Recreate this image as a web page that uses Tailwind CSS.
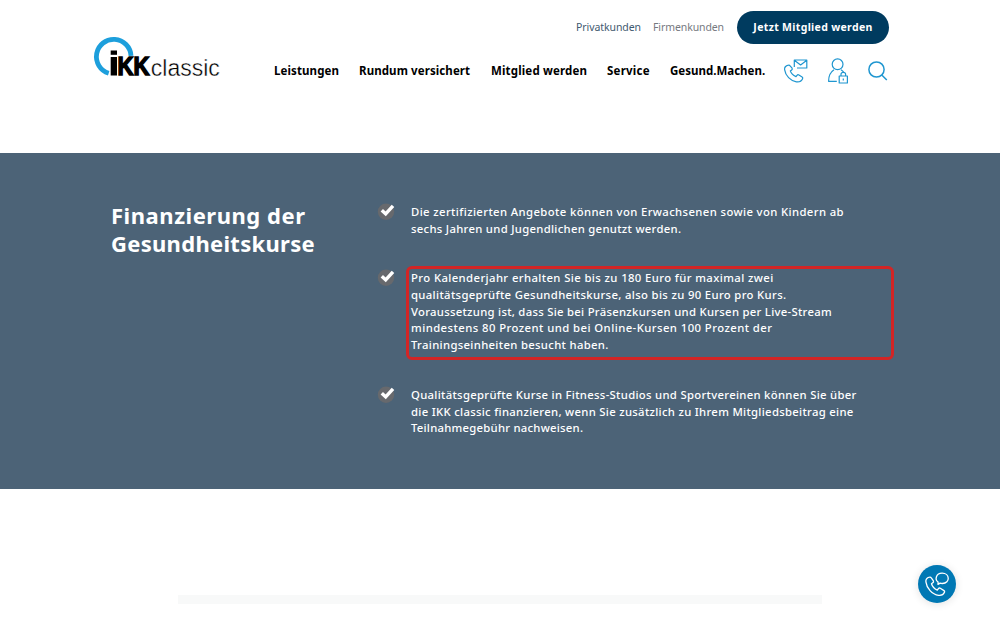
<!DOCTYPE html>
<html lang="de">
<head>
  <meta charset="UTF-8">
  <meta name="viewport" content="width=device-width, initial-scale=1.0">
  <title>IKK classic</title>
  <script src="https://cdn.jsdelivr.net/npm/@tailwindcss/browser@4"></script>
</head>
<body class="relative h-[625px] overflow-hidden bg-white font-['Noto_Sans',sans-serif]">

  <header class="flex h-[153px] justify-between pl-[94px] pr-[111px]">
    <a href="#" class="mt-[36px]">
      <svg class="h-[50px] w-[134px] overflow-visible" viewBox="0 0 134 50">
        <path d="M14.7 37.2A17.3 17.3 0 1 1 37 19.8" fill="none" stroke="#1d9fdc" stroke-width="4.8"/>
        <rect x="16.7" y="14.5" width="6.3" height="4.3"/>
        <rect x="16.7" y="21" width="6.3" height="18.5"/>
        <text x="23.5" y="39.300" font-family="Liberation Sans, sans-serif" font-weight="700" font-size="25" textLength="32" lengthAdjust="spacingAndGlyphs" stroke="#000" stroke-width="1.5">KK</text>
        <text x="56.8" y="39.5" font-family="Liberation Sans, sans-serif" font-size="24.5" textLength="69" lengthAdjust="spacingAndGlyphs" fill="#000" stroke="#fff" stroke-width=".4">classic</text>
      </svg>
    </a>

    <div>
      <div class="mt-[11px] flex h-[33px] items-center justify-end whitespace-nowrap text-[10.5px]">
        <a href="#" class="mr-[12px] tracking-[-0.07px] text-[#3f5a70]">Privatkunden</a>
        <a href="#" class="mr-[13px] tracking-[-0.1px] text-[#76797f]">Firmenkunden</a>
        <a href="#" class="flex h-[33px] w-[152px] items-center justify-center rounded-full bg-[#003b5f] font-bold tracking-[0.33px] text-white">Jetzt Mitglied werden</a>
      </div>

      <nav class="mt-[12px] flex h-[30px] items-center whitespace-nowrap text-[11.5px] font-bold text-black">
        <a href="#" class="w-[85px] tracking-[0.1px]">Leistungen</a>
        <a href="#" class="w-[132px] tracking-[0.09px]">Rundum versichert</a>
        <a href="#" class="w-[116px] tracking-[0.16px]">Mitglied werden</a>
        <a href="#" class="w-[63px] tracking-[0.23px]">Service</a>
        <a href="#" class="w-[113px]">Gesund.Machen.</a>
        <svg class="mr-[17px] size-[26px]" viewBox="0 0 26 26" fill="none" stroke="#1f96d0" stroke-width="1.2" stroke-linejoin="round">
          <path d="M5.5 7.2C3 7.800 1.3 9.300 1.600 11.600C2.400 17.500 7.500 22.900 13.400 23.800C15.700 24.100 18.600 23 19.600 20.700C19.900 20 19.700 19.400 19.100 19L15.900 17C15.200 16.600 14.500 16.700 14 17.300L13 18.600C10.500 17.500 8 15.200 7.300 12.900L8.700 11.900C9.300 11.500 9.400 10.900 9.100 10.200L7.100 7.900C6.700 7.300 6.200 7 5.500 7.200Z"/>
          <path d="M11.300 9V2H23.800V10H14M11.300 2.300L17.600 7L23.800 2.300"/>
        </svg>
        <svg class="mr-[15px] size-[26px]" viewBox="0 0 26 26" fill="none" stroke="#1f96d0" stroke-width="1.2" stroke-linejoin="round">
          <circle cx="11.6" cy="6.3" r="5.4"/>
          <path d="M10.8 23.3H2.6C2.6 18.5 4.1 14.3 8 11.8M15 11.8C16.3 12.6 17.300 13.5 18 14.7"/>
          <path d="M13.2 18H21.4V25H13.200ZM15 18V16.300C15 13.700 19.600 13.700 19.600 16.300V18M17.300 20.600V22.400"/>
        </svg>
        <svg class="-mr-[4px] size-[26px]" viewBox="0 0 26 26" fill="none" stroke="#1f96d0" stroke-width="1.5">
          <circle cx="9.5" cy="11.5" r="7.6"/>
          <path d="M15 17.2L19.8 22"/>
        </svg>
      </nav>
    </div>
  </header>

  <main>
    <section class="flex h-[336px] bg-[#4c6377] pl-[111px] text-white">
      <h1 class="mt-[48px] w-[266px] whitespace-nowrap text-[22px] font-bold leading-[28px]">
        <span class="block tracking-[0.54px]">Finanzierung der</span>
        <span class="block tracking-[0.3px]">Gesundheitskurse</span>
      </h1>

      <ul class="mt-[47px] whitespace-nowrap text-[11.3px] font-medium leading-[16.7px]">
        <li class="mb-[24px] flex">
          <svg class="mt-[2px] mr-[12px] size-[18px] overflow-visible" viewBox="0 0 18 18">
            <circle cx="9" cy="9.7" r="8.2" fill="#67696d"/>
            <path d="M4.8 8.2L8.7 11.9L16 3.800" fill="none" stroke="#fff" stroke-width="3.4"/>
          </svg>
          <p class="h-[42px] w-[487px] pt-[4px] pl-[4px]">
            <span class="block tracking-[0.39px]">Die zertifizierten Angebote können von Erwachsenen sowie von Kindern ab</span>
            <span class="block tracking-[0.304px]">sechs Jahren und Jugendlichen genutzt werden.</span>
          </p>
        </li>
        <li class="mb-[23px] flex">
          <svg class="mt-[2px] mr-[12px] size-[18px] overflow-visible" viewBox="0 0 18 18">
            <circle cx="9" cy="9.7" r="8.2" fill="#67696d"/>
            <path d="M4.8 8.2L8.7 11.9L16 3.800" fill="none" stroke="#fff" stroke-width="3.4"/>
          </svg>
          <p class="-ml-px h-[94px] w-[488px] rounded-[6px] border-[3px] border-[#d32525] pt-[1.3px] pl-[2px]">
            <span class="block tracking-[0.4px]">Pro Kalenderjahr erhalten Sie bis zu 180 Euro für maximal zwei</span>
            <span class="block tracking-[0.35px]">qualitätsgeprüfte Gesundheitskurse, also bis zu 90 Euro pro Kurs.</span>
            <span class="block tracking-[0.288px]">Voraussetzung ist, dass Sie bei Präsenzkursen und Kursen per Live-Stream</span>
            <span class="block tracking-[0.443px]">mindestens 80 Prozent und bei Online-Kursen 100 Prozent der</span>
            <span class="block tracking-[0.33px]">Trainingseinheiten besucht haben.</span>
          </p>
        </li>
        <li class="flex">
          <svg class="mt-[2px] mr-[12px] size-[18px] overflow-visible" viewBox="0 0 18 18">
            <circle cx="9" cy="9.7" r="8.2" fill="#67696d"/>
            <path d="M4.8 8.2L8.7 11.9L16 3.800" fill="none" stroke="#fff" stroke-width="3.4"/>
          </svg>
          <p class="w-[487px] pt-[4px] pl-[4px]">
            <span class="block tracking-[0.31px]">Qualitätsgeprüfte Kurse in Fitness-Studios und Sportvereinen können Sie über</span>
            <span class="block tracking-[0.31px]">die IKK classic finanzieren, wenn Sie zusätzlich zu Ihrem Mitgliedsbeitrag eine</span>
            <span class="block tracking-[0.258px]">Teilnahmegebühr nachweisen.</span>
          </p>
        </li>
      </ul>
    </section>

    <div class="mx-auto mt-[106px] h-[9px] w-[644px] bg-[#f8f9f9]"></div>
  </main>

  <button class="absolute top-[565px] left-[918px] flex size-[38px] items-center justify-center rounded-full bg-[#0078b4] shadow-[0_1px_8px_rgba(0,0,0,0.12)]">
    <svg class="size-[26px]" viewBox="0 0 26 26" fill="none" stroke="#fff" stroke-width="1.3" stroke-linejoin="round">
      <path d="M5.5 6.2C3 6.8 1.6 8.5 1.9 10.8C2.7 17.2 8 23.5 14.6 24.4C17.2 24.7 19.5 23.6 20.5 21.3C20.8 20.6 20.6 20 20 19.6L16.3 17.3C15.6 16.9 14.9 17 14.4 17.6L13.3 19.1C10.5 17.8 8.3 15.3 7.5 12.7L9 11.6C9.6 11.2 9.7 10.6 9.4 9.9L7.3 6.9C6.9 6.3 6.2 6 5.5 6.2Z"/>
      <path d="M14 13.4L14.1 11C10.5 8.5 12 2.3 18 2.1C26 2 26.5 12.3 18.4 12.5C17.4 12.5 16.7 12.4 16.1 12.1Z"/>
    </svg>
  </button>

</body>
</html>
